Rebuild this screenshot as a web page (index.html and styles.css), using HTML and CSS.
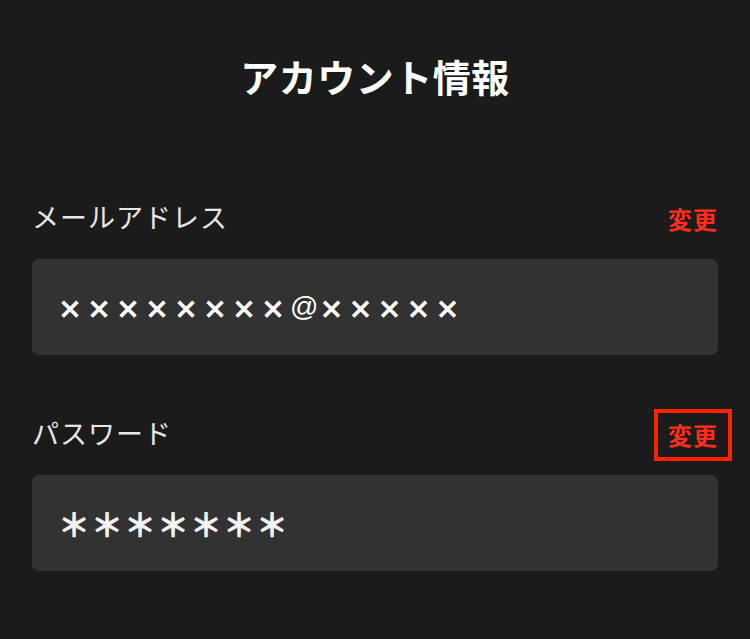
FILE: index.html
```html
<!DOCTYPE html>
<html lang="ja">
<head>
    <meta charset="UTF-8">
    <meta name="viewport" content="width=device-width, initial-scale=1.0">
    <title>アカウント情報</title>
    <link rel="stylesheet" href="styles.css">
</head>
<body>
    <div class="page">
        <h1 class="title">アカウント情報</h1>

        <div class="field">
            <div class="field-head">
                <span class="label">メールアドレス</span>
                <a class="change" href="#">変更</a>
            </div>
            <div class="value value-mail">××××××××<span class="at">@</span>×××××</div>
        </div>

        <div class="field">
            <div class="field-head">
                <span class="label">パスワード</span>
                <a class="change marked" href="#">変更</a>
            </div>
            <div class="value value-pass">＊＊＊＊＊＊＊</div>
        </div>
    </div>
</body>
</html>
```

FILE: styles.css
```css
* {
    box-sizing: border-box;
}

body {
    margin: 0;
    padding: 0;
    background: #1b1b1b;
    font-family: "Noto Sans CJK JP", "Noto Sans", sans-serif;
    color: #ffffff;
    min-height: 100vh;
}

.page {
    padding: 51px 32px 40px;
}

.title {
    margin: 0;
    text-align: center;
    font-size: 38px;
    line-height: 50px;
    font-weight: 700;
    letter-spacing: 0.5px;
}

.field {
    margin-top: 96px;
}

.field + .field {
    margin-top: 58px;
}

.field-head {
    display: flex;
    justify-content: space-between;
    align-items: center;
    height: 40px;
    margin-bottom: 22px;
}

.label {
    font-size: 27px;
    line-height: 40px;
    font-weight: 400;
    color: #e6e6e6;
    letter-spacing: 1px;
}

.change {
    margin-top: 4px;
    font-size: 24px;
    line-height: 24px;
    font-weight: 700;
    letter-spacing: 1px;
    color: #ff2d1c;
    text-decoration: none;
}

.change.marked {
    outline: 4px solid #ff2200;
    outline-offset: 10px;
}

.value {
    display: flex;
    align-items: center;
    height: 96px;
    padding: 0 26px;
    background: #323232;
    border-radius: 7px;
    color: #ffffff;
}

.value-mail {
    font-size: 24px;
    font-weight: 700;
    letter-spacing: 5px;
    -webkit-text-stroke: 1px #ffffff;
}

.value-mail .at {
    font-family: "Liberation Sans", sans-serif;
    font-size: 28px;
    font-weight: 400;
    letter-spacing: 1px;
    -webkit-text-stroke: 0;
}

.value-pass {
    font-size: 32px;
    font-weight: 700;
    letter-spacing: 1px;
    color: #f2f2f2;
    -webkit-text-stroke: 0.6px #f2f2f2;
}
```
